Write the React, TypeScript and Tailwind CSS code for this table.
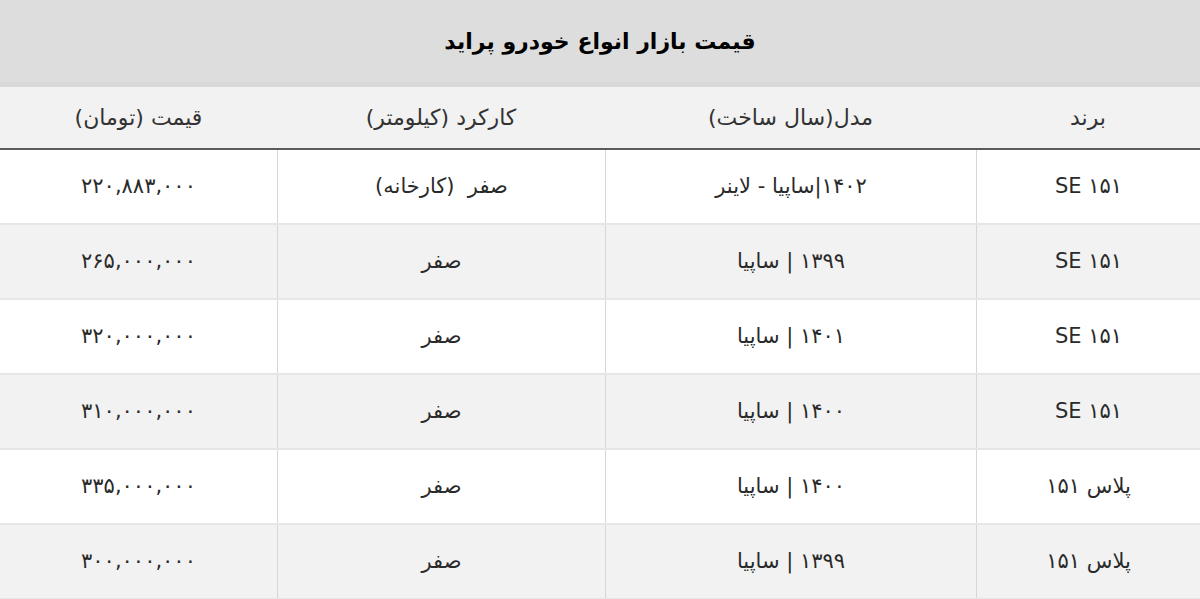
import React from "react";

// Pride (Saipa) market price table, RTL Persian layout.
const columns = ["برند", "مدل(سال ساخت)", "کارکرد (کیلومتر)", "قیمت (تومان)"];

const rows: [string, string, string, string][] = [
  ["SE ۱۵۱", "۱۴۰۲|ساپیا - لاینر", "صفر  (کارخانه)", "۲۲۰,۸۸۳,۰۰۰"],
  ["SE ۱۵۱", "۱۳۹۹ | ساپیا", "صفر", "۲۶۵,۰۰۰,۰۰۰"],
  ["SE ۱۵۱", "۱۴۰۱ | ساپیا", "صفر", "۳۲۰,۰۰۰,۰۰۰"],
  ["SE ۱۵۱", "۱۴۰۰ | ساپیا", "صفر", "۳۱۰,۰۰۰,۰۰۰"],
  ["پلاس ۱۵۱", "۱۴۰۰ | ساپیا", "صفر", "۳۳۵,۰۰۰,۰۰۰"],
  ["پلاس ۱۵۱", "۱۳۹۹ | ساپیا", "صفر", "۳۰۰,۰۰۰,۰۰۰"],
];

const grid = "grid grid-cols-[224px_371px_328px_277px]";

export default function App() {
  return (
    <div
      dir="rtl"
      className="w-[1200px] h-[599px] overflow-hidden bg-white text-[#222]"
      style={{ fontFamily: '"DejaVu Sans", sans-serif' }}
    >
      <div className="h-[87px] bg-[#dddddd] border-b-[5px] border-[#d9d9d9] flex items-center justify-center">
        <h1 className="text-[22px] font-bold text-black">قیمت بازار انواع خودرو پراید</h1>
      </div>

      <div className={`${grid} h-[63px] bg-[#f2f2f2] border-b-2 border-[#5c5c5c]`}>
        {columns.map((c) => (
          <div key={c} className="flex items-center justify-center text-[22px] text-[#333]">
            {c}
          </div>
        ))}
      </div>

      {rows.map((r, i) => (
        <div
          key={i}
          className={`${grid} h-[75px] border-b-2 border-[#e6e6e6] ${i % 2 ? "bg-[#f2f2f2]" : "bg-white"}`}
        >
          {r.map((cell, j) => (
            <div
              key={j}
              className={`flex items-center justify-center text-[21px] text-[#2a2a2a] whitespace-pre ${
                j < 3 ? "border-l border-[#d6d6d6]" : ""
              }`}
            >
              {cell}
            </div>
          ))}
        </div>
      ))}
    </div>
  );
}
